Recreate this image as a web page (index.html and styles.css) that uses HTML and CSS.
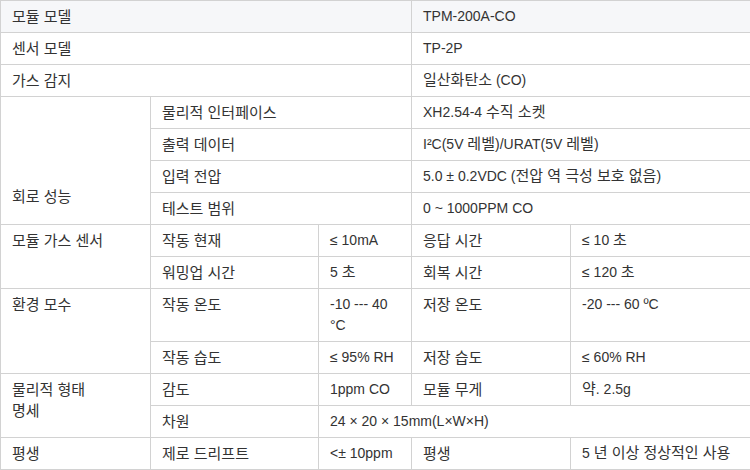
FILE: index.html
```html
<!DOCTYPE html>
<html lang="ko">
<head>
<meta charset="utf-8">
<title>TPM-200A-CO</title>
<link rel="stylesheet" href="styles.css">
</head>
<body>
<table class="spec">
  <colgroup>
    <col class="c1"><col class="c2"><col class="c3"><col class="c4"><col class="c5">
  </colgroup>
  <tbody>
    <tr class="head">
      <td colspan="3" class="ko">모듈 모델</td>
      <td colspan="2">TPM-200A-CO</td>
    </tr>
    <tr>
      <td colspan="3" class="ko">센서 모델</td>
      <td colspan="2">TP-2P</td>
    </tr>
    <tr>
      <td colspan="3" class="ko">가스 감지</td>
      <td colspan="2"><span class="ko">일산화탄소</span> (CO)</td>
    </tr>
    <tr>
      <td rowspan="4" class="ko low">회로 성능</td>
      <td colspan="2" class="ko">물리적 인터페이스</td>
      <td colspan="2">XH2.54-4 <span class="ko">수직 소켓</span></td>
    </tr>
    <tr>
      <td colspan="2" class="ko">출력 데이터</td>
      <td colspan="2">I²C(5V <span class="ko">레벨</span>)/URAT(5V <span class="ko">레벨</span>)</td>
    </tr>
    <tr>
      <td colspan="2" class="ko">입력 전압</td>
      <td colspan="2">5.0 ± 0.2VDC (<span class="ko">전압 역 극성 보호 없음</span>)</td>
    </tr>
    <tr>
      <td colspan="2" class="ko">테스트 범위</td>
      <td colspan="2">0 ~ 1000PPM CO</td>
    </tr>
    <tr>
      <td rowspan="2" class="ko">모듈 가스 센서</td>
      <td class="ko">작동 현재</td>
      <td>≤ 10mA</td>
      <td class="ko">응답 시간</td>
      <td>≤ 10 <span class="ko">초</span></td>
    </tr>
    <tr>
      <td class="ko">워밍업 시간</td>
      <td>5 <span class="ko">초</span></td>
      <td class="ko">회복 시간</td>
      <td>≤ 120 <span class="ko">초</span></td>
    </tr>
    <tr>
      <td rowspan="2" class="ko">환경 모수</td>
      <td class="ko">작동 온도</td>
      <td>-10 --- 40 °C</td>
      <td class="ko">저장 온도</td>
      <td>-20 --- 60 ºC</td>
    </tr>
    <tr>
      <td class="ko">작동 습도</td>
      <td>≤ 95% RH</td>
      <td class="ko">저장 습도</td>
      <td>≤ 60% RH</td>
    </tr>
    <tr>
      <td rowspan="2" class="ko">물리적 형태<br>명세</td>
      <td class="ko">감도</td>
      <td>1ppm CO</td>
      <td class="ko">모듈 무게</td>
      <td><span class="ko">약</span>. 2.5g</td>
    </tr>
    <tr>
      <td class="ko">차원</td>
      <td colspan="3">24 × 20 × 15mm(L×W×H)</td>
    </tr>
    <tr>
      <td class="ko">평생</td>
      <td class="ko">제로 드리프트</td>
      <td>&lt;± 10ppm</td>
      <td class="ko">평생</td>
      <td>5 <span class="ko">년 이상 정상적인 사용</span></td>
    </tr>
  </tbody>
</table>
</body>
</html>
```
FILE: styles.css
```css
html, body {
  margin: 0;
  padding: 0;
  background: #ffffff;
}

.spec {
  width: 750px;
  border-collapse: collapse;
  table-layout: fixed;
  font-family: "Liberation Sans", "Noto Sans CJK KR", sans-serif;
  font-size: 14px;
  line-height: 21px;
  color: #333333;
}

.c1 { width: 150px; }
.c2 { width: 168px; }
.c3 { width: 93px; }
.c4 { width: 159px; }
.c5 { width: 180px; }

.spec td {
  border: 1px solid #d2d2d2;
  padding: 5px 11px;
  vertical-align: top;
  text-align: left;
}

.spec .ko {
  font-size: 15px;
  line-height: 21px;
}

.spec span.ko {
  line-height: 1;
}

.spec .head td {
  background: #f6f7f9;
}

.spec td.low {
  padding-top: 89px;
}
```
